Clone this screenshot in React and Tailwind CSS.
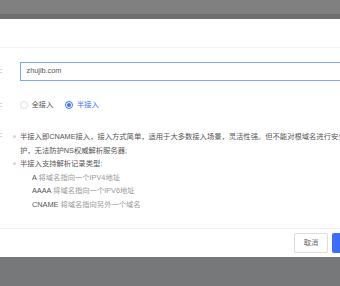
const font = { fontFamily: '"Liberation Sans", "Noto Sans CJK SC", sans-serif' };

const records = [
  { type: "A", desc: "将域名指向一个IPV4地址" },
  { type: "AAAA", desc: "将域名指向一个IPV6地址" },
  { type: "CNAME", desc: "将域名指向另外一个域名" },
];

function Bullet() {
  return (
    <span className="flex h-[13.4px] w-[7px] shrink-0 items-center">
      <span className="h-[3px] w-[3px] rounded-full bg-[#d6d6d6]" />
    </span>
  );
}

function Label({ children }) {
  return (
    <div className="w-[62px] shrink-0 whitespace-nowrap text-right text-[7.3px] text-[#555]">
      {children}
      <span className="ml-[2px]">:</span>
    </div>
  );
}

export default function App() {
  return (
    <div
      className="flex h-[286px] w-[340px] flex-col overflow-hidden bg-[#77787a]"
      style={font}
    >
      <div className="h-[14px] shrink-0 bg-[#808080]" />
      <div className="h-[5px] shrink-0 bg-[#6f6f6f]" />

      <div className="ml-[-60px] flex h-[238px] w-[460px] shrink-0 flex-col bg-white">
        <div className="h-[29px] shrink-0 border-b border-[#f2f2f2]" />

        <div className="flex flex-1 flex-col pt-[14px]">
          <div className="flex items-center">
            <Label>域名</Label>
            <div className="ml-[18px] flex h-[19px] flex-1 items-center border border-[#7ea5f8] px-[5.5px] text-[7.3px] text-[#555]">
              zhujib.com
            </div>
          </div>

          <div className="mt-[19px] flex h-[10px] items-center">
            <Label>接入方式</Label>
            <div className="ml-[18px] flex items-center text-[7.3px]">
              <span className="h-[7.5px] w-[7.5px] rounded-full border border-[#e0e0e0]" />
              <span className="ml-[4px] text-[#555]">全接入</span>
              <span className="ml-[12px] flex h-[7.5px] w-[7.5px] items-center justify-center rounded-full border border-[#3b72f6]">
                <span className="h-[3.5px] w-[3.5px] rounded-full bg-[#3b72f6]" />
              </span>
              <span className="ml-[4px] text-[#3b72f6]">半接入</span>
            </div>
          </div>

          <div className="mt-[20px] flex">
            <Label>说明</Label>
            <div className="ml-[11px] flex-1 text-[7.3px] leading-[13.5px] text-[#555]">
              <div className="flex">
                <Bullet />
                <div className="whitespace-nowrap">
                  半接入即CNAME接入，接入方式简单，适用于大多数接入场景，灵活性强。但不能对根域名进行安全防
                  <br />
                  护，无法防护NS权威解析服务器;
                </div>
              </div>
              <div className="flex">
                <Bullet />
                <div>半接入支持解析记录类型:</div>
              </div>
              <div className="pl-[19px]">
                {records.map((r) => (
                  <div key={r.type}>
                    {r.type} <span className="text-[#999]">{r.desc}</span>
                  </div>
                ))}
              </div>
            </div>
          </div>
        </div>

        <div className="flex h-[29px] shrink-0 items-center gap-[4px] border-t border-[#f0f0f0] pl-[354px]">
          <button className="flex h-[20px] w-[34px] items-center justify-center rounded-[2px] border border-[#dcdcdc] text-[7.3px] text-[#666]">
            取消
          </button>
          <button className="flex h-[20px] w-[34px] items-center justify-center rounded-[2px] bg-[#3b6ef6] text-[7.3px] text-white">
            确定
          </button>
        </div>
      </div>
    </div>
  );
}
